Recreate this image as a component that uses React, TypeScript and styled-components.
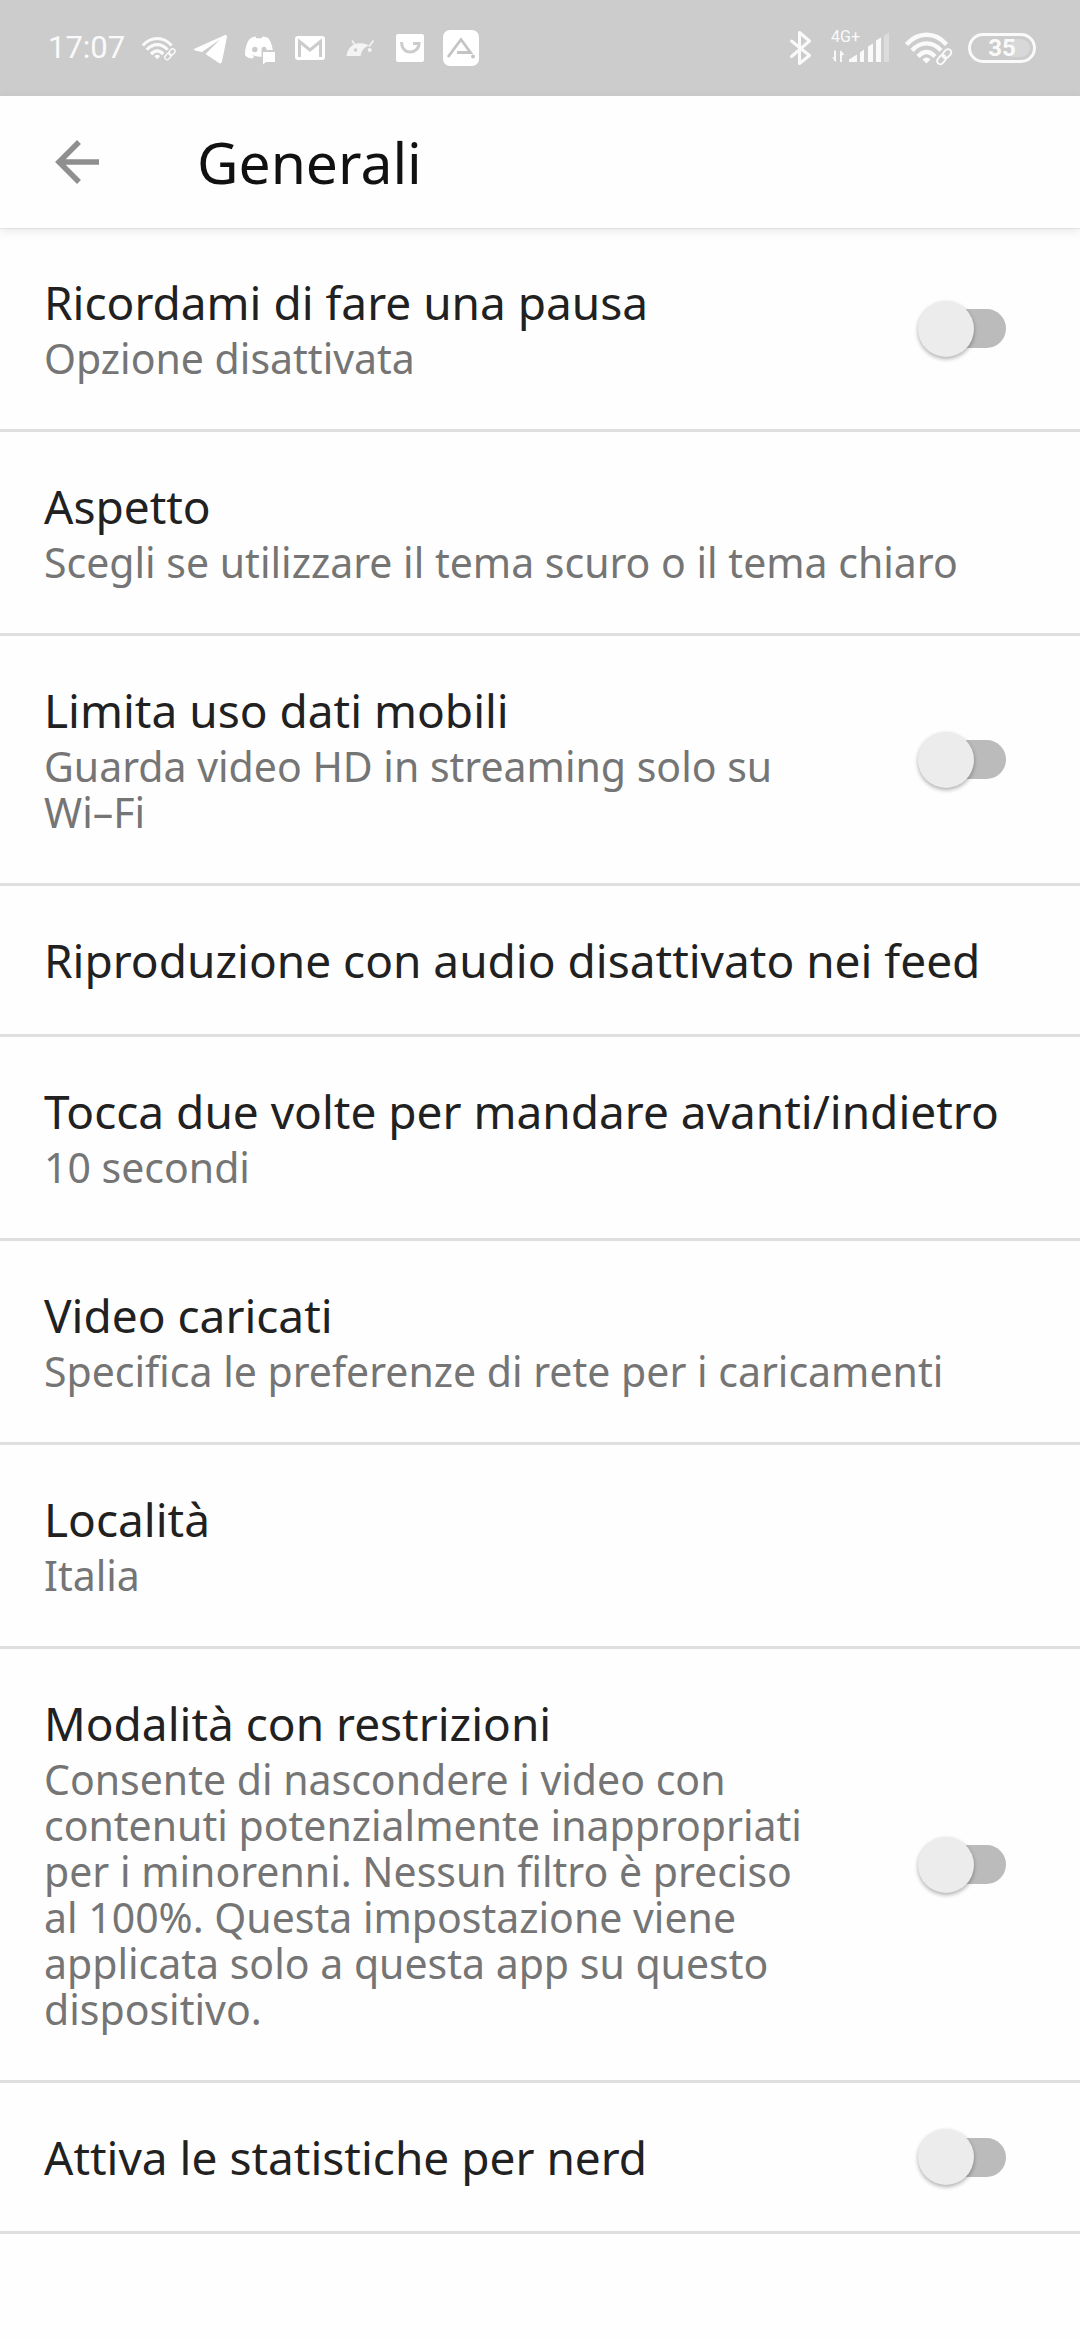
import React from 'react';
import styled, { createGlobalStyle } from 'styled-components';

const GlobalStyle = createGlobalStyle`
  * { box-sizing: border-box; }
  body {
    margin: 0;
    background: #fefefe;
    font-family: "Noto Sans", "Open Sans", sans-serif;
    -webkit-font-smoothing: antialiased;
  }
`;

const Screen = styled.div`
  min-height: 100vh;
  display: flex;
  flex-direction: column;
  background: #fefefe;
`;

const StatusBar = styled.div`
  display: flex;
  align-items: center;
  justify-content: space-between;
  height: 96px;
  padding: 0 44px 0 48px;
  background: #cccccc;
  color: #fafafa;
`;

const StatusGroup = styled.div<{ $gap: number }>`
  display: flex;
  align-items: center;
  gap: ${(p) => p.$gap}px;
`;

const Clock = styled.time`
  font-family: Roboto, sans-serif;
  font-size: 31px;
  line-height: 40px;
`;

const Glyph = styled.svg`
  display: block;
  flex: none;
  height: 40px;
`;

const Signal = styled.div`
  display: grid;
  justify-items: start;
  align-items: start;
  > * { grid-area: 1 / 1; }
`;

const NetworkType = styled.span`
  font-family: Roboto, sans-serif;
  font-size: 16px;
  line-height: 18px;
  padding-left: 2px;
`;

const Battery = styled.div`
  display: flex;
  align-items: center;
  justify-content: center;
  width: 68px;
  height: 30px;
  border: 3px solid #fafafa;
  border-radius: 15px;
  padding: 3px;
`;

const BatteryLevel = styled.span`
  display: flex;
  align-items: center;
  justify-content: center;
  width: 100%;
  height: 18px;
  border-radius: 9px;
  background: linear-gradient(90deg, #cccccc 66%, #d8d8d8 66%);
  font-family: Roboto, sans-serif;
  font-weight: 700;
  font-size: 24px;
  line-height: 18px;
`;

const AppBar = styled.header`
  position: relative;
  z-index: 1;
  display: flex;
  align-items: center;
  gap: 95px;
  height: 132px;
  padding: 0 48px;
  background: #fefefe;
  box-shadow: 0 1px 1px rgba(0, 0, 0, 0.06), 0 3px 10px rgba(0, 0, 0, 0.09);
`;

const BackButton = styled.button`
  display: flex;
  padding: 0;
  border: 0;
  background: none;
  color: #8f8f8f;
`;

const PageTitle = styled.h1`
  margin: 0;
  font-weight: 400;
  font-size: 57px;
  line-height: 72px;
  color: #111111;
`;

const List = styled.ul`
  margin: 0;
  padding: 0;
  list-style: none;
`;

const Item = styled.li`
  border-bottom: 3px solid #dfdfdf;
`;

const Row = styled.div`
  display: flex;
  align-items: center;
  justify-content: space-between;
  gap: 102px;
  width: 100%;
  padding: 48px 74px 48px 44px;
  border: 0;
  background: none;
  font: inherit;
  text-align: left;
`;

const Texts = styled.span`
  display: flex;
  flex-direction: column;
  gap: 7px;
  min-width: 0;
`;

const Title = styled.span`
  font-size: 46px;
  line-height: 52px;
  color: #212121;
`;

const Summary = styled.span`
  font-size: 41px;
  line-height: 46px;
  color: #757575;
`;

const Switch = styled.input`
  appearance: none;
  display: flex;
  align-items: center;
  flex: none;
  width: 86px;
  height: 39px;
  margin: 0;
  border-radius: 20px;
  background: #bbbbbb;

  &::before {
    content: "";
    flex: none;
    width: 56px;
    height: 56px;
    margin-left: -2px;
    border-radius: 50%;
    background: #ececec;
    box-shadow: 0 2px 4px rgba(0, 0, 0, 0.32);
  }

  &:checked { background: #8ab4f8; }
  &:checked::before { margin-left: 32px; background: #065fd4; }
`;

type Setting = { id: string; title: string; summary?: string; toggle?: boolean };

const settings: Setting[] = [
  { id: 'pausa', title: 'Ricordami di fare una pausa', summary: 'Opzione disattivata', toggle: true },
  { id: 'aspetto', title: 'Aspetto', summary: 'Scegli se utilizzare il tema scuro o il tema chiaro' },
  { id: 'dati', title: 'Limita uso dati mobili', summary: 'Guarda video HD in streaming solo su Wi–Fi', toggle: true },
  { id: 'feed', title: 'Riproduzione con audio disattivato nei feed' },
  { id: 'tocca', title: 'Tocca due volte per mandare avanti/indietro', summary: '10 secondi' },
  { id: 'caricati', title: 'Video caricati', summary: 'Specifica le preferenze di rete per i caricamenti' },
  { id: 'localita', title: 'Località', summary: 'Italia' },
  {
    id: 'restrizioni',
    title: 'Modalità con restrizioni',
    summary:
      'Consente di nascondere i video con contenuti potenzialmente inappropriati per i minorenni. Nessun filtro è preciso al 100%. Questa impostazione viene applicata solo a questa app su questo dispositivo.',
    toggle: true,
  },
  { id: 'nerd', title: 'Attiva le statistiche per nerd', toggle: true },
];

const LinkedWifi = ({ width }: { width: number }) => (
  <Glyph
    width={width}
    viewBox="0 0 50 32"
    fill="none"
    stroke="currentColor"
    strokeWidth="4.4"
    aria-hidden="true"
  >
    <path d="M2.5 12.5C14 -0.5 31 -0.5 42.5 12.5" />
    <path d="M8 18.5C16.500 9 28.500 9 37 18.500" />
    <path d="M14 24.500C19.500 18.500 25.500 18.500 31 24.500" />
    <path d="M22.500 31.500l-4-4c2-2.800 6-2.800 8 0z" fill="currentColor" stroke="none" />
    <g strokeWidth="1.900" transform="rotate(-48 40 24.500)">
      <rect x="31" y="21.500" width="10" height="6.500" rx="3.200" />
      <rect x="39" y="21.500" width="10" height="6.500" rx="3.200" />
    </g>
  </Glyph>
);

const TelegramIcon = () => (
  <Glyph width={35} viewBox="192 28 35 40" fill="#fff" aria-hidden="true">
    <path d="M194 48.500L223.500 35.200c1.800-.7 2.700.3 2.400 2L221 61.500c-.4 2-1.800 2.500-3.400 1.300L204.500 54l14.500-14.500L201 52l-7-1.500c-1.500-.4-1.400-1.400 0-2z" />
  </Glyph>
);

const DiscordIcon = () => (
  <Glyph width={33} viewBox="243 28 33 40" aria-hidden="true">
    <path
      fill="#fff"
      d="M250 38c-3.500 2.500-6 9-6 17 2 2.600 4.700 3.500 7.500 3.500l1.500-2.300-3-1.700c6 2.500 9 2.300 10.500 2.300V50h11.200c-.5-5-2.500-10-4.700-12-2-.9-3.800-1.200-5.500-1.400l-.8 1.600h-5.400l-.8-1.600c-1.700.2-3 .6-4.500 1.400z"
    />
    <circle cx="253.800" cy="49.500" r="2.700" fill="#ccc" />
    <path fill="#ccc" d="M260.500 50c-.3-2 1-3.200 2.500-3.200s2.600 1.200 2.600 3.200z" />
    <path fill="#fff" d="M262 52h12v10h-9l-3 2.500z" />
  </Glyph>
);

const GmailIcon = () => (
  <Glyph width={34} viewBox="292 28 34 40" aria-hidden="true">
    <rect x="294" y="36" width="30" height="24" rx="3" fill="#fff" />
    <path d="M298.500 57V41.500L309 50l10.500-8.500V57" fill="none" stroke="#ccc" strokeWidth="3" />
  </Glyph>
);

const AndroidIcon = () => (
  <Glyph width={34} viewBox="342 28 34 40" aria-hidden="true">
    <path d="M345.500 56c1-8 6-12.800 13-12.800 3.500 0 7 .5 9.500 2.300-4.500 1.500-7.500 5-8.500 10.500z" fill="#f4f4f4" />
    <path d="M351 40.500l3.500 5M372.500 40.500l-4.500 6" stroke="#f4f4f4" strokeWidth="1.500" />
    <circle cx="354.500" cy="50" r="1.700" fill="#ccc" />
    <circle cx="368.700" cy="50" r="2" fill="#f4f4f4" />
  </Glyph>
);

const BagIcon = () => (
  <Glyph width={34} viewBox="392 28 34 40" aria-hidden="true">
    <rect x="395" y="34" width="28" height="28" rx="2" fill="#fff" />
    <path d="M400.500 42c0 6 3.500 10 8.500 10s9-3.500 9-8.500h-6" fill="none" stroke="#ccc" strokeWidth="3" />
  </Glyph>
);

const AIcon = () => (
  <Glyph width={36} viewBox="441 28 36 40" aria-hidden="true">
    <rect x="441" y="30" width="36" height="36" rx="7" fill="#fff" />
    <path d="M446 57l13-17.500L468.500 52.500H455" fill="none" stroke="#c4c4c4" strokeWidth="2.800" />
    <circle cx="471" cy="56.500" r="2" fill="#c4c4c4" />
  </Glyph>
);

const BluetoothIcon = () => (
  <Glyph width={26} viewBox="788 28 26 40" fill="none" stroke="currentColor" strokeWidth="3" strokeLinejoin="round" strokeLinecap="round" aria-hidden="true">
    <path d="M790.500 41L808.500 55.500L798.500 63.500V32.500L808.500 41L790.500 56.500" />
  </Glyph>
);

const SignalIcon = () => (
  <Glyph width={61} viewBox="828 28 61 40" fill="currentColor" aria-hidden="true">
    <path d="M834 50.500V61M840 62V51.500" stroke="currentColor" strokeWidth="1.900" />
    <path d="M831 57.500h4V62zM843.500 55h-4v-5z" />
    <path d="M848 62v-2.500l8-5V62zM859 62V52.500l4-3V62zM867 62V46.500l5-3V62zM875 62V40.500l5-3V62z" />
    <path d="M883 62V35.500l5-3V62z" fill="#dcdcdc" />
  </Glyph>
);

export default function App() {
  return (
    <Screen>
      <GlobalStyle />
      <StatusBar>
        <StatusGroup $gap={16}>
          <Clock>17:07</Clock>
          <LinkedWifi width={36} />
          <TelegramIcon />
          <DiscordIcon />
          <GmailIcon />
          <AndroidIcon />
          <BagIcon />
          <AIcon />
        </StatusGroup>
        <StatusGroup $gap={14}>
          <BluetoothIcon />
          <Signal>
            <NetworkType>4G+</NetworkType>
            <SignalIcon />
          </Signal>
          <LinkedWifi width={50} />
          <Battery>
            <BatteryLevel>35</BatteryLevel>
          </Battery>
        </StatusGroup>
      </StatusBar>
      <AppBar>
        <BackButton type="button" aria-label="Indietro">
          <svg width="54" height="54" viewBox="0 0 54 54" fill="none" stroke="currentColor" strokeWidth="5.500" aria-hidden="true">
            <path d="M31 7L11 27L31 47M12 27H51" />
          </svg>
        </BackButton>
        <PageTitle>Generali</PageTitle>
      </AppBar>
      <List>
        {settings.map((s) => (
          <Item key={s.id}>
            <Row as={s.toggle ? 'label' : 'button'} {...(s.toggle ? { htmlFor: s.id } : { type: 'button' })}>
              <Texts>
                <Title>{s.title}</Title>
                {s.summary && <Summary>{s.summary}</Summary>}
              </Texts>
              {s.toggle && <Switch id={s.id} type="checkbox" role="switch" />}
            </Row>
          </Item>
        ))}
      </List>
    </Screen>
  );
}
